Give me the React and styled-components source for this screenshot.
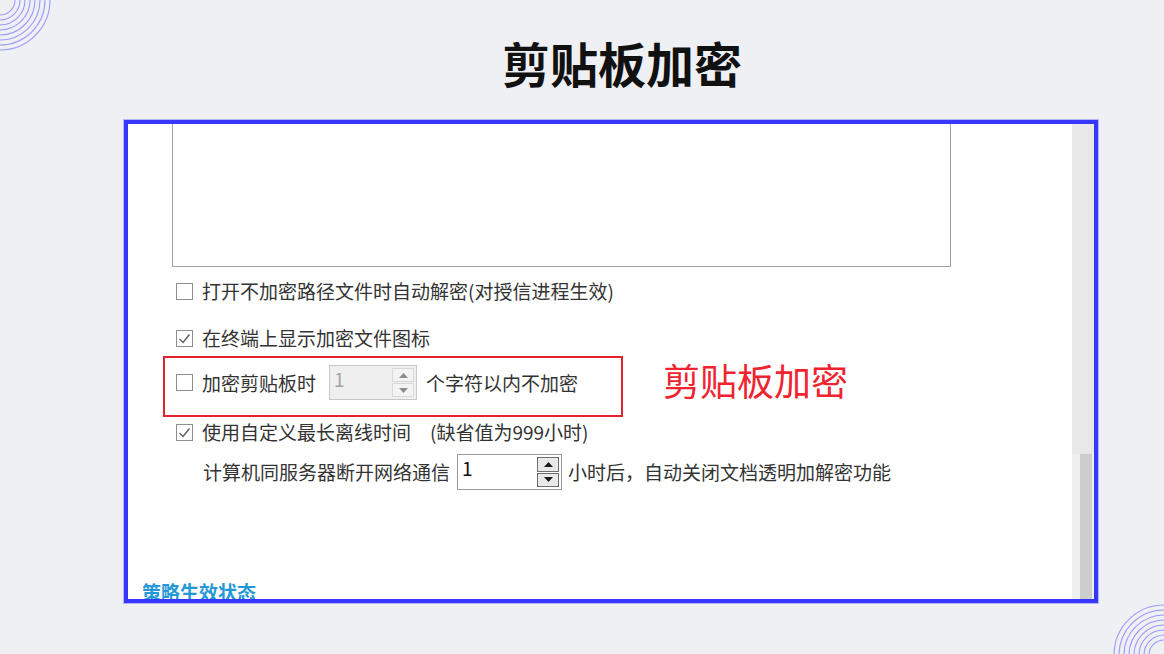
import React from "react";
import styled, { createGlobalStyle } from "styled-components";

const GlobalStyle = createGlobalStyle`
  html, body {
    margin: 0;
    padding: 0;
    background: #eff0f4;
  }
  body {
    width: 1164px;
    height: 654px;
    overflow: hidden;
    font-family: "Noto Sans CJK SC", "Noto Sans", sans-serif;
  }
`;

const Page = styled.div`
  position: relative;
  width: 1164px;
  height: 654px;
  background: #eff0f4;
  overflow: hidden;
`;

const Rings = styled.svg`
  position: absolute;
  width: 60px;
  height: 60px;
  ${(p) => (p.$corner === "tl" ? "left: 0; top: 0;" : "right: 0; bottom: 0;")}
`;

const TitleBar = styled.div`
  height: 120px;
  padding-left: 80px;
  padding-top: 4px;
  display: flex;
  align-items: center;
  justify-content: center;
  box-sizing: border-box;
`;

const Title = styled.h1`
  margin: 0;
  font-size: 48px;
  line-height: 48px;
  font-weight: 700;
  color: #111;
`;

const Frame = styled.div`
  margin-left: 124px;
  width: 974px;
  height: 483px;
  box-sizing: border-box;
  border: 4px solid #3737fc;
  box-shadow: 0 0 0 1px #b4b4ff;
  background: #fff;
  display: flex;
`;

const Content = styled.div`
  flex: 1;
  overflow: hidden;
  display: flex;
  flex-direction: column;
  color: #333;
  font-size: 19px;
`;

const Scrollbar = styled.div`
  width: 22px;
  display: flex;
  flex-direction: column;
`;

const Track = styled.div`
  height: 330px;
  background: #e8e8e8;
`;

const ThumbArea = styled.div`
  flex: 1;
  background: #efefef;
  padding-left: 8px;
  padding-right: 2px;
  display: flex;
`;

const Thumb = styled.div`
  flex: 1;
  background: #cdcdcd;
`;

const TextArea = styled.div`
  margin-left: 44px;
  width: 779px;
  height: 143px;
  box-sizing: border-box;
  border: 1px solid #9ea2a7;
  border-top: none;
  flex-shrink: 0;
`;

const Row = styled.div`
  display: flex;
  align-items: center;
  height: ${(p) => p.$h || 30}px;
  margin-top: ${(p) => p.$mt || 0}px;
  padding-left: ${(p) => p.$pl ?? 48}px;
  flex-shrink: 0;
  white-space: nowrap;
`;

const Box = styled.span`
  width: 17px;
  height: 17px;
  box-sizing: border-box;
  border: 1px solid #8e8e8e;
  background: #fff;
  margin-right: 9px;
  display: flex;
  align-items: center;
  justify-content: center;
  flex-shrink: 0;
`;

const Label = styled.span`
  line-height: 24px;
`;

const HighlightLine = styled.div`
  display: flex;
  align-items: center;
  margin-top: 3px;
  margin-left: 35px;
  gap: 40px;
  flex-shrink: 0;
`;

const RedBox = styled.div`
  width: 460px;
  height: 61px;
  box-sizing: border-box;
  border: 2px solid #e3222c;
  padding: 7px 0 0 11px;
  display: flex;
  align-items: flex-start;
  white-space: nowrap;
`;

const InnerRow = styled.div`
  display: flex;
  align-items: center;
  height: 35px;
`;

const RedLabel = styled.span`
  color: #f0232f;
  font-size: 37px;
  line-height: 44px;
  margin-top: -14px;
`;

const Spin = styled.div`
  width: ${(p) => p.$w}px;
  height: ${(p) => p.$h}px;
  box-sizing: border-box;
  border: 1px solid ${(p) => (p.$disabled ? "#c6c6c6" : "#9a9a9a")};
  background: ${(p) => (p.$disabled ? "#efefef" : "#fff")};
  margin: 0 ${(p) => p.$mr}px 0 ${(p) => p.$ml}px;
  display: flex;
  align-items: stretch;
  flex-shrink: 0;
`;

const SpinValue = styled.span`
  flex: 1;
  padding-left: 4px;
  line-height: 26px;
  color: ${(p) => (p.$disabled ? "#a5a5a5" : "#111")};
`;

const SpinButtons = styled.div`
  width: 22px;
  padding: 2px 2px 2px 0;
  display: flex;
  flex-direction: column;
  gap: 1px;
`;

const SpinButton = styled.div`
  flex: 1;
  box-sizing: border-box;
  border: 1px solid ${(p) => (p.$disabled ? "#d8d8d8" : "#6e6e6e")};
  background: ${(p) => (p.$disabled ? "#f3f3f3" : "#e9e9e9")};
  display: flex;
  align-items: center;
  justify-content: center;
`;

const SectionLink = styled.div`
  margin-top: 90px;
  padding-left: 14px;
  color: #2598d6;
  font-size: 19px;
  font-weight: 700;
  line-height: 24px;
  flex-shrink: 0;
`;

function RingSet({ corner }) {
  const cx = corner === "tl" ? 0 : 60;
  const cy = corner === "tl" ? 0 : 61;
  const radii = [15, 20, 25, 30, 35, 40, 45, 50];
  return (
    <Rings $corner={corner} viewBox="0 0 60 60">
      {radii.map((r) => (
        <circle key={r} cx={cx} cy={cy} r={r} fill="none" stroke="#9a9aff" strokeWidth="1.1" />
      ))}
    </Rings>
  );
}

function CheckBox({ checked }) {
  return (
    <Box>
      {checked && (
        <svg width="13" height="13" viewBox="0 0 13 13">
          <polyline points="1.5,7 5,10.5 11.5,2.5" fill="none" stroke="#5e5e5e" strokeWidth="1.4" />
        </svg>
      )}
    </Box>
  );
}

function Arrow({ up, disabled }) {
  return (
    <svg width="9" height="5" viewBox="0 0 9 5">
      <polygon
        points={up ? "0,5 4.5,0 9,5" : "0,0 4.5,5 9,0"}
        fill={disabled ? "#8c8c8c" : "#1a1a1a"}
      />
    </svg>
  );
}

function SpinBox({ value, disabled, w, h, ml, mr }) {
  return (
    <Spin $disabled={disabled} $w={w} $h={h} $ml={ml} $mr={mr}>
      <SpinValue $disabled={disabled}>{value}</SpinValue>
      <SpinButtons>
        <SpinButton $disabled={disabled}>
          <Arrow up disabled={disabled} />
        </SpinButton>
        <SpinButton $disabled={disabled}>
          <Arrow disabled={disabled} />
        </SpinButton>
      </SpinButtons>
    </Spin>
  );
}

export default function App() {
  return (
    <Page>
      <GlobalStyle />
      <RingSet corner="tl" />
      <RingSet corner="br" />
      <TitleBar>
        <Title>剪贴板加密</Title>
      </TitleBar>
      <Frame>
        <Content>
          <TextArea />
          <Row $mt={9}>
            <CheckBox />
            <Label>打开不加密路径文件时自动解密(对授信进程生效)</Label>
          </Row>
          <Row $mt={17}>
            <CheckBox checked />
            <Label>在终端上显示加密文件图标</Label>
          </Row>
          <HighlightLine>
            <RedBox>
              <InnerRow>
                <CheckBox />
                <Label>加密剪贴板时</Label>
                <SpinBox value="1" disabled w={88} h={35} ml={13} mr={9} />
                <Label>个字符以内不加密</Label>
              </InnerRow>
            </RedBox>
            <RedLabel>剪贴板加密</RedLabel>
          </HighlightLine>
          <Row>
            <CheckBox checked />
            <Label>使用自定义最长离线时间　(缺省值为999小时)</Label>
          </Row>
          <Row $mt={7} $h={36} $pl={75}>
            <Label>计算机同服务器断开网络通信</Label>
            <SpinBox value="1" w={105} h={36} ml={7} mr={6} />
            <Label>小时后，自动关闭文档透明加解密功能</Label>
          </Row>
          <SectionLink>策略生效状态</SectionLink>
        </Content>
        <Scrollbar>
          <Track />
          <ThumbArea>
            <Thumb />
          </ThumbArea>
        </Scrollbar>
      </Frame>
    </Page>
  );
}
